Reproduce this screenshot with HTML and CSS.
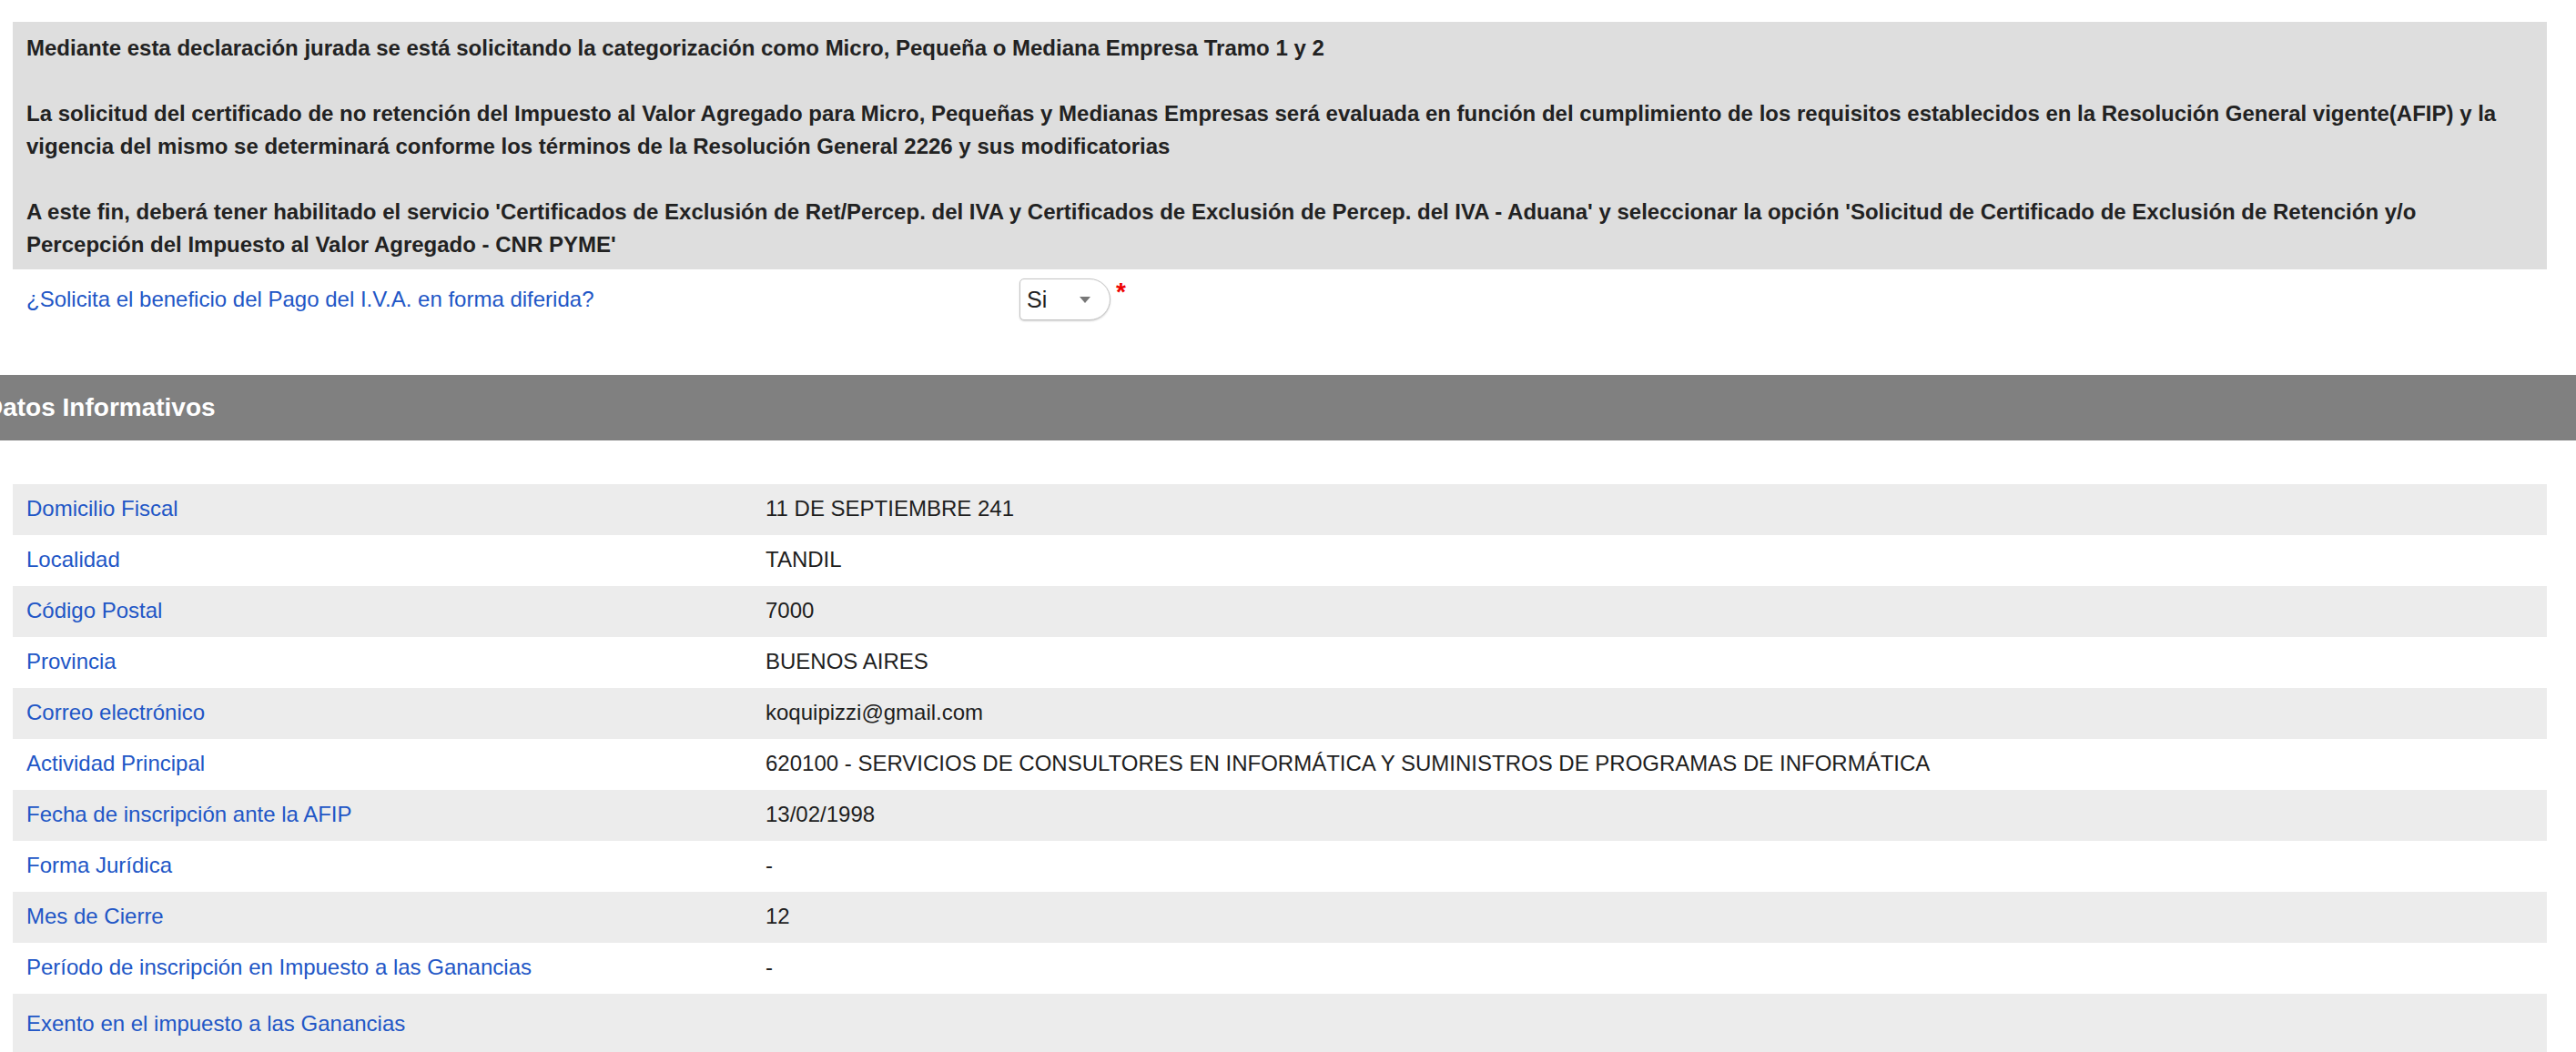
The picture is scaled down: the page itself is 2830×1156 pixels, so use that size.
FILE: index.html
```html
<!DOCTYPE html>
<html lang="es">
<head>
<meta charset="utf-8">
<title>Declaración jurada PYME</title>
<link rel="stylesheet" href="styles.css">
</head>
<body>
<div class="top">
  <div class="notice">
    <p>Mediante esta declaración jurada se está solicitando la categorización como Micro, Pequeña o Mediana Empresa Tramo 1 y 2</p>
    <p>La solicitud del certificado de no retención del Impuesto al Valor Agregado para Micro, Pequeñas y Medianas Empresas será evaluada en función del cumplimiento de los requisitos establecidos en la Resolución General vigente(AFIP) y la<br>vigencia del mismo se determinará conforme los términos de la Resolución General 2226 y sus modificatorias</p>
    <p>A este fin, deberá tener habilitado el servicio 'Certificados de Exclusión de Ret/Percep. del IVA y Certificados de Exclusión de Percep. del IVA - Aduana' y seleccionar la opción 'Solicitud de Certificado de Exclusión de Retención y/o<br>Percepción del Impuesto al Valor Agregado - CNR PYME'</p>
  </div>
  <div class="question">
    <div class="q-label">¿Solicita el beneficio del Pago del I.V.A. en forma diferida?</div>
    <div class="q-field">
      <div class="select"><span class="select-value">Si</span><span class="select-arrow"></span></div>
      <span class="required">*</span>
    </div>
  </div>
</div>

<h2 class="section-title">Datos Informativos</h2>

<div class="rows">
  <div class="row"><div class="label">Domicilio Fiscal</div><div class="value">11 DE SEPTIEMBRE 241</div></div>
  <div class="row"><div class="label">Localidad</div><div class="value">TANDIL</div></div>
  <div class="row"><div class="label">Código Postal</div><div class="value">7000</div></div>
  <div class="row"><div class="label">Provincia</div><div class="value">BUENOS AIRES</div></div>
  <div class="row"><div class="label">Correo electrónico</div><div class="value">koquipizzi@gmail.com</div></div>
  <div class="row"><div class="label">Actividad Principal</div><div class="value">620100 - SERVICIOS DE CONSULTORES EN INFORMÁTICA Y SUMINISTROS DE PROGRAMAS DE INFORMÁTICA</div></div>
  <div class="row"><div class="label">Fecha de inscripción ante la AFIP</div><div class="value">13/02/1998</div></div>
  <div class="row"><div class="label">Forma Jurídica</div><div class="value">-</div></div>
  <div class="row"><div class="label">Mes de Cierre</div><div class="value">12</div></div>
  <div class="row"><div class="label">Período de inscripción en Impuesto a las Ganancias</div><div class="value">-</div></div>
  <div class="row row-tall"><div class="label">Exento en el impuesto a las Ganancias</div><div class="value"></div></div>
</div>
</body>
</html>
```

FILE: styles.css
```css
html, body {
  margin: 0;
  padding: 0;
  background: #ffffff;
}

html {
  overflow: hidden;
}

body {
  font-family: "Liberation Sans", Arial, Helvetica, sans-serif;
  font-size: 24px;
  color: #222222;
  height: 1156px;
  overflow: hidden;
}

.top {
  padding: 24px 32px 0 14px;
}

.notice {
  background: #dedede;
  padding: 11px 15px 9px;
  font-weight: bold;
  font-size: 24px;
  line-height: 36px;
  color: #222222;
}

.notice p {
  margin: 36px 0 0;
}

.notice p:first-child {
  margin-top: 0;
}

.question {
  display: grid;
  grid-template-columns: 1106px auto;
  align-items: center;
  height: 65px;
}

.q-label {
  padding-left: 15px;
  color: #2156c6;
  line-height: 30px;
}

.q-field {
  display: flex;
  align-items: flex-start;
  height: 45px;
}

.select {
  box-sizing: border-box;
  width: 100px;
  height: 46px;
  border: 1px solid #c4c4c4;
  border-radius: 5px 23px 23px 5px;
  box-shadow: 0 1px 2px rgba(0, 0, 0, 0.18);
  background: #ffffff;
  display: flex;
  align-items: center;
  padding-left: 7px;
  color: #222222;
  font-size: 25px;
}

.select-value {
  line-height: 1;
}

.select-arrow {
  margin-left: auto;
  margin-right: 21px;
  width: 0;
  height: 0;
  border-left: 6px solid transparent;
  border-right: 6px solid transparent;
  border-top: 7px solid #777777;
}

.required {
  color: #ee0000;
  font-weight: bold;
  font-size: 28px;
  line-height: 24px;
  margin-left: 6px;
  margin-top: 3px;
}

.section-title {
  margin: 51px 0 0;
  height: 72px;
  background: #808080;
  color: #ffffff;
  font-size: 28px;
  font-weight: bold;
  line-height: 72px;
  text-indent: -17px;
  white-space: nowrap;
}

.rows {
  margin: 48px 32px 0 14px;
}

.row {
  display: grid;
  grid-template-columns: 827px 1fr;
  line-height: 54px;
  padding-bottom: 2px;
  background: #ffffff;
}

.row:nth-child(odd) {
  background: #ececec;
}

.row-tall {
  padding-top: 6px;
  padding-bottom: 4px;
}

.label {
  padding-left: 15px;
  color: #2156c6;
}

.value {
  color: #1e1e1e;
}
```
